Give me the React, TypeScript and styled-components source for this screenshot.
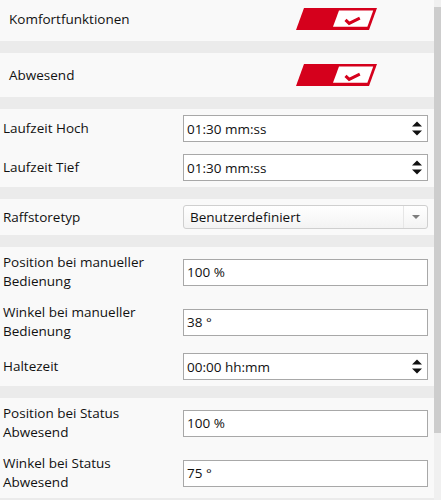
import React from 'react';
import styled, { createGlobalStyle } from 'styled-components';

const Global = createGlobalStyle`
  html, body { margin: 0; padding: 0; background: #ebebeb; }
  body { font-family: "Open Sans", "Noto Sans", sans-serif; color: #111; }
  * { box-sizing: border-box; }
`;

const Frame = styled.div`
  display: flex;
  width: 441px;
  height: 500px;
  overflow: hidden;
  background: #ebebeb;
`;

const Content = styled.div`
  flex: 1;
  display: flex;
  flex-direction: column;
  gap: 12px;
  margin-top: -3px;
`;

const ScrollTrack = styled.div`
  width: 7px;
  background: #f0f0f0;
  display: flex;
  flex-direction: column;
  padding-top: 7px;
`;

const ScrollThumb = styled.div`
  height: 426px;
  background: #cdcdcd;
`;

const Section = styled.section`
  background: #f9f9f9;
  display: flex;
  flex-direction: column;
`;

const ToggleRow = styled.div`
  height: 44px;
  display: grid;
  grid-template-columns: 1fr 81px;
  align-items: center;
  padding: 0 57px 0 9px;
`;

const FieldRow = styled.div<{ $tall?: boolean }>`
  display: grid;
  grid-template-columns: 180px 245px;
  align-items: center;
  padding: 0 6px 0 3px;
  height: ${(p) => (p.$tall ? '50px' : '39px')};
`;

const SelectRow = styled(FieldRow)`
  height: 36px;
`;

const Label = styled.div`
  font-size: 13.5px;
  line-height: 19px;
  padding-right: 24px;
`;

const Field = styled.div`
  height: 27px;
  background: #fff;
  border: 1px solid #a8a8a8;
  display: flex;
  align-items: center;
  justify-content: space-between;
  padding: 0 5px 0 3px;
  font-size: 13.5px;
`;

const Select = styled.div`
  height: 24px;
  border: 1px solid #cfcfcf;
  border-radius: 3px;
  background: linear-gradient(#ffffff, #f3f3f3);
  display: flex;
  align-items: stretch;
  font-size: 13.5px;
`;

const SelectValue = styled.div`
  flex: 1;
  display: flex;
  align-items: center;
  padding-left: 6px;
`;

const SelectButton = styled.div`
  width: 24px;
  border-left: 1px solid #e6e6e6;
  display: flex;
  align-items: center;
  justify-content: center;
`;

const Spinner = () => (
  <svg width="10" height="15" viewBox="0 0 10 15">
    <path d="M0 5.5 L5 0.5 L10 5.5 Z" fill="#111" />
    <path d="M0 9.5 L10 9.5 L5 14.5 Z" fill="#111" />
  </svg>
);

const Toggle = () => (
  <svg width="81" height="22" viewBox="0 0 81 22">
    <path d="M8 0 L81 0 L73 22 L0 22 Z" fill="#d5001c" />
    <path d="M43 2.6 L77.2 2.6 L71.4 18.8 L37 18.8 Z" fill="#fff" />
    <path d="M49.5 11.8 L53.2 15.4 L63.8 10.2" fill="none" stroke="#d5001c" strokeWidth="3" strokeLinejoin="miter" />
  </svg>
);

type Row = { label: string; value: string; spin?: boolean; tall?: boolean };

const FieldLine = ({ label, value, spin, tall }: Row) => (
  <FieldRow $tall={tall}>
    <Label>{label}</Label>
    <Field>
      <span>{value}</span>
      {spin && <Spinner />}
    </Field>
  </FieldRow>
);

export default function App() {
  return (
    <>
      <Global />
      <Frame>
        <Content>
          <Section>
            <ToggleRow>
              <Label>Komfortfunktionen</Label>
              <Toggle />
            </ToggleRow>
          </Section>
          <Section>
            <ToggleRow>
              <Label>Abwesend</Label>
              <Toggle />
            </ToggleRow>
          </Section>
          <Section>
            <FieldLine label="Laufzeit Hoch" value="01:30 mm:ss" spin />
            <FieldLine label="Laufzeit Tief" value="01:30 mm:ss" spin />
          </Section>
          <Section>
            <SelectRow>
              <Label>Raffstoretyp</Label>
              <Select>
                <SelectValue>Benutzerdefiniert</SelectValue>
                <SelectButton>
                  <svg width="8" height="4" viewBox="0 0 8 4">
                    <path d="M0 0 L8 0 L4 4 Z" fill="#7d7d7d" />
                  </svg>
                </SelectButton>
              </Select>
            </SelectRow>
          </Section>
          <Section>
            <FieldLine label="Position bei manueller Bedienung" value="100 %" tall />
            <FieldLine label="Winkel bei manueller Bedienung" value="38 °" tall />
            <FieldLine label="Haltezeit" value="00:00 hh:mm" spin />
          </Section>
          <Section>
            <FieldLine label="Position bei Status Abwesend" value="100 %" tall />
            <FieldLine label="Winkel bei Status Abwesend" value="75 °" tall />
          </Section>
        </Content>
        <ScrollTrack>
          <ScrollThumb />
        </ScrollTrack>
      </Frame>
    </>
  );
}
